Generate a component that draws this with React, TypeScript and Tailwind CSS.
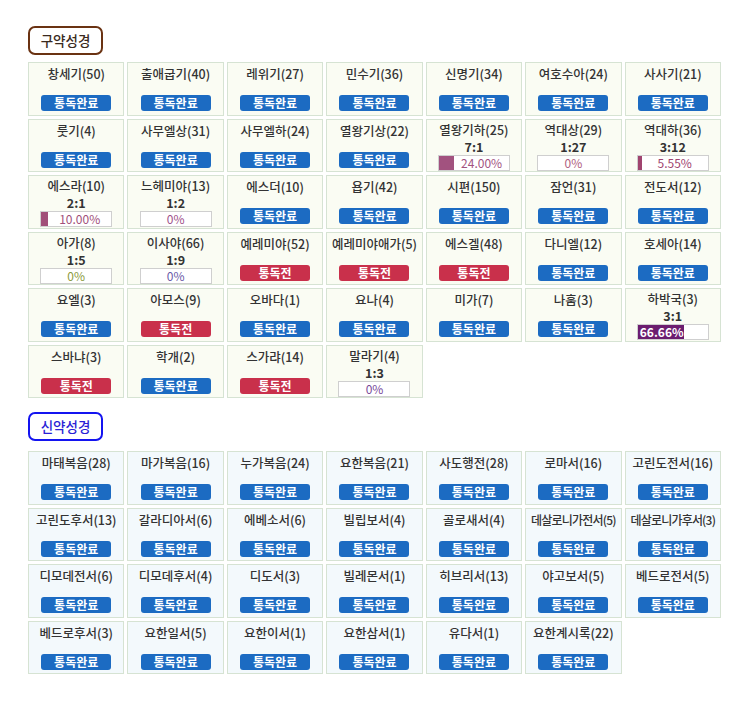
import React from 'react';

type Book = {
  name: string;
  status: 'done' | 'todo' | 'progress';
  ratio?: string;
  pct?: number;
  label?: string;
  color?: string;
  tight?: boolean;
};

const done = (name: string, tight = false): Book => ({ name, status: 'done', tight });
const todo = (name: string): Book => ({ name, status: 'todo' });
const prog = (name: string, ratio: string, pct: number, label: string, color: string): Book => ({
  name,
  status: 'progress',
  ratio,
  pct,
  label,
  color,
});

const oldTestament: Book[] = [
  done('창세기(50)'), done('출애굽기(40)'), done('레위기(27)'), done('민수기(36)'), done('신명기(34)'), done('여호수아(24)'), done('사사기(21)'),
  done('룻기(4)'), done('사무엘상(31)'), done('사무엘하(24)'), done('열왕기상(22)'),
  prog('열왕기하(25)', '7:1', 22, '24.00%', '#a2527f'),
  prog('역대상(29)', '1:27', 0, '0%', '#b0607e'),
  prog('역대하(36)', '3:12', 5.55, '5.55%', '#a0446f'),
  prog('에스라(10)', '2:1', 10, '10.00%', '#a14f79'),
  prog('느헤미야(13)', '1:2', 0, '0%', '#a0508a'),
  done('에스더(10)'), done('욥기(42)'), done('시편(150)'), done('잠언(31)'), done('전도서(12)'),
  prog('아가(8)', '1:5', 0, '0%', '#8c9a3c'),
  prog('이사야(66)', '1:9', 0, '0%', '#6a5aa8'),
  todo('예레미야(52)'), todo('예레미야애가(5)'), todo('에스겔(48)'), done('다니엘(12)'), done('호세아(14)'),
  done('요엘(3)'), todo('아모스(9)'), done('오바다(1)'), done('요나(4)'), done('미가(7)'), done('나훔(3)'),
  prog('하박국(3)', '3:1', 66.66, '66.66%', '#6b1d6f'),
  todo('스바냐(3)'), done('학개(2)'), todo('스가랴(14)'),
  prog('말라기(4)', '1:3', 0, '0%', '#7a4a9a'),
];

const newTestament: Book[] = [
  done('마태복음(28)'), done('마가복음(16)'), done('누가복음(24)'), done('요한복음(21)'), done('사도행전(28)'), done('로마서(16)'), done('고린도전서(16)'),
  done('고린도후서(13)'), done('갈라디아서(6)'), done('에베소서(6)'), done('빌립보서(4)'), done('골로새서(4)'), done('데살로니가전서(5)', true), done('데살로니가후서(3)', true),
  done('디모데전서(6)'), done('디모데후서(4)'), done('디도서(3)'), done('빌레몬서(1)'), done('히브리서(13)'), done('야고보서(5)'), done('베드로전서(5)'),
  done('베드로후서(3)'), done('요한일서(5)'), done('요한이서(1)'), done('요한삼서(1)'), done('유다서(1)'), done('요한계시록(22)'),
];

const ProgressBar = ({ book }: { book: Book }) => {
  const pct = book.pct ?? 0;
  const inside = pct > 50;
  return (
    <div className="mt-[1px] flex w-[72px] h-[16px] border border-[#cfcfcf] bg-white overflow-hidden">
      {pct > 0 && (
        <div
          className={`h-full flex items-center text-[12px] leading-none font-bold text-white ${inside ? 'pl-[2px]' : ''}`}
          style={{ width: `${pct}%`, backgroundColor: book.color }}
        >
          {inside && book.label}
        </div>
      )}
      <div className="flex-1 flex items-center justify-center text-[12px] leading-none" style={{ color: book.color }}>
        {!inside && book.label}
      </div>
    </div>
  );
};

const BookCell = ({ book, bg }: { book: Book; bg: string }) => (
  <div className={`h-[53.5px] border border-[#d6e3d3] ${bg} flex flex-col items-center`}>
    {book.status === 'progress' ? (
      <>
        <div className="mt-[2px] h-[16px] leading-[16px] text-[12.5px] font-medium text-[#333] whitespace-nowrap">
          {book.name}
        </div>
        <div className="mt-[1px] h-[15px] leading-[15px] text-[12.5px] font-bold text-[#333]">{book.ratio}</div>
        <ProgressBar book={book} />
      </>
    ) : (
      <>
        <div
          className={`mt-[3px] h-[16px] leading-[16px] font-medium text-[#333] whitespace-nowrap ${
            book.tight ? 'text-[12px] tracking-[-0.8px]' : 'text-[12.5px]'
          }`}
        >
          {book.name}
        </div>
        <div
          className={`mt-[13px] w-[70px] h-[16px] rounded-[3px] flex items-center justify-center text-[12px] leading-none font-bold text-white ${
            book.status === 'done' ? 'bg-[#1c6bc2]' : 'bg-[#c9304b]'
          }`}
        >
          {book.status === 'done' ? '통독완료' : '통독전'}
        </div>
      </>
    )}
  </div>
);

const Section = ({
  title,
  books,
  titleClass,
  bg,
  gridTop,
}: {
  title: string;
  books: Book[];
  titleClass: string;
  bg: string;
  gridTop: string;
}) => (
  <section>
    <div
      className={`w-[75px] h-[29px] border-2 rounded-[7px] flex items-center justify-center text-[13.5px] font-medium ${titleClass}`}
    >
      {title}
    </div>
    <div className={`${gridTop} grid grid-cols-7 gap-[3px] w-[693px]`}>
      {books.map((b) => (
        <BookCell key={b.name} book={b} bg={bg} />
      ))}
    </div>
  </section>
);

export default function App() {
  return (
    <div
      className="min-h-[701px] bg-white pl-[28px] pt-[26px] flex flex-col gap-[14px]"
      style={{ fontFamily: '"Noto Sans CJK KR", "Noto Sans", sans-serif' }}
    >
      <Section
        title="구약성경"
        books={oldTestament}
        titleClass="border-[#6a3212] text-[#3a2a20]"
        bg="bg-[#fafcf3]"
        gridTop="mt-[7px]"
      />
      <Section
        title="신약성경"
        books={newTestament}
        titleClass="border-[#1414f0] text-[#2a1fd6]"
        bg="bg-[#f3f9fc]"
        gridTop="mt-[10px]"
      />
    </div>
  );
}
